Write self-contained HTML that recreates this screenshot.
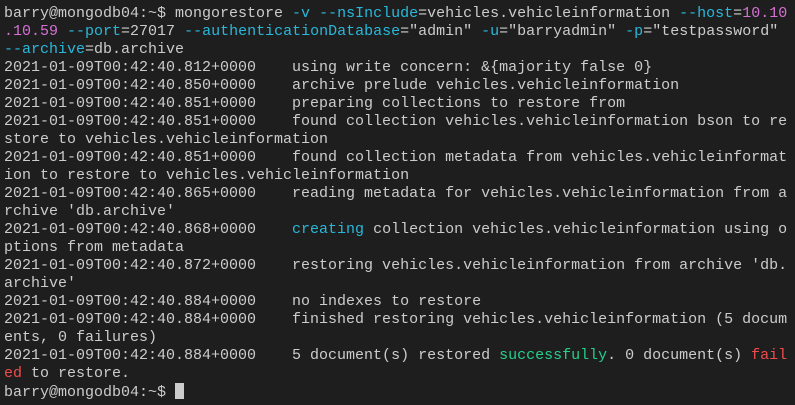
<!DOCTYPE html>
<html><head><style>
html,body{margin:0;padding:0;background:#1e1e1e;width:795px;height:405px;overflow:hidden}
pre{margin:0;padding:5px 0 0 4px;font-family:"Liberation Mono",monospace;font-size:15px;line-height:18px;color:#cccccc;white-space:pre}
.c{color:#29b8db}.m{color:#d670d6}.g{color:#23d18b}.r{color:#f14c4c}
.cur{display:inline-block;width:9px;height:16px;background:#cccccc;vertical-align:-3px}
</style></head><body><pre>barry@mongodb04:~$ mongorestore <span class="c">-v</span> <span class="c">--nsInclude</span>=vehicles.vehicleinformation <span class="c">--host</span>=<span class="m">10.10</span>
<span class="m">.10.59</span> <span class="c">--port</span>=27017 <span class="c">--authenticationDatabase</span>="admin" <span class="c">-u</span>="barryadmin" <span class="c">-p</span>="testpassword"
<span class="c">--archive</span>=db.archive
2021-01-09T00:42:40.812+0000    using write concern: &amp;{majority false 0}
2021-01-09T00:42:40.850+0000    archive prelude vehicles.vehicleinformation
2021-01-09T00:42:40.851+0000    preparing collections to restore from
2021-01-09T00:42:40.851+0000    found collection vehicles.vehicleinformation bson to re
store to vehicles.vehicleinformation
2021-01-09T00:42:40.851+0000    found collection metadata from vehicles.vehicleinformat
ion to restore to vehicles.vehicleinformation
2021-01-09T00:42:40.865+0000    reading metadata for vehicles.vehicleinformation from a
rchive 'db.archive'
2021-01-09T00:42:40.868+0000    <span class="c">creating</span> collection vehicles.vehicleinformation using o
ptions from metadata
2021-01-09T00:42:40.872+0000    restoring vehicles.vehicleinformation from archive 'db.
archive'
2021-01-09T00:42:40.884+0000    no indexes to restore
2021-01-09T00:42:40.884+0000    finished restoring vehicles.vehicleinformation (5 docum
ents, 0 failures)
2021-01-09T00:42:40.884+0000    5 document(s) restored <span class="g">successfully</span>. 0 document(s) <span class="r">fail</span>
<span class="r">ed</span> to restore.
barry@mongodb04:~$ <span class="cur"></span></pre></body></html>
